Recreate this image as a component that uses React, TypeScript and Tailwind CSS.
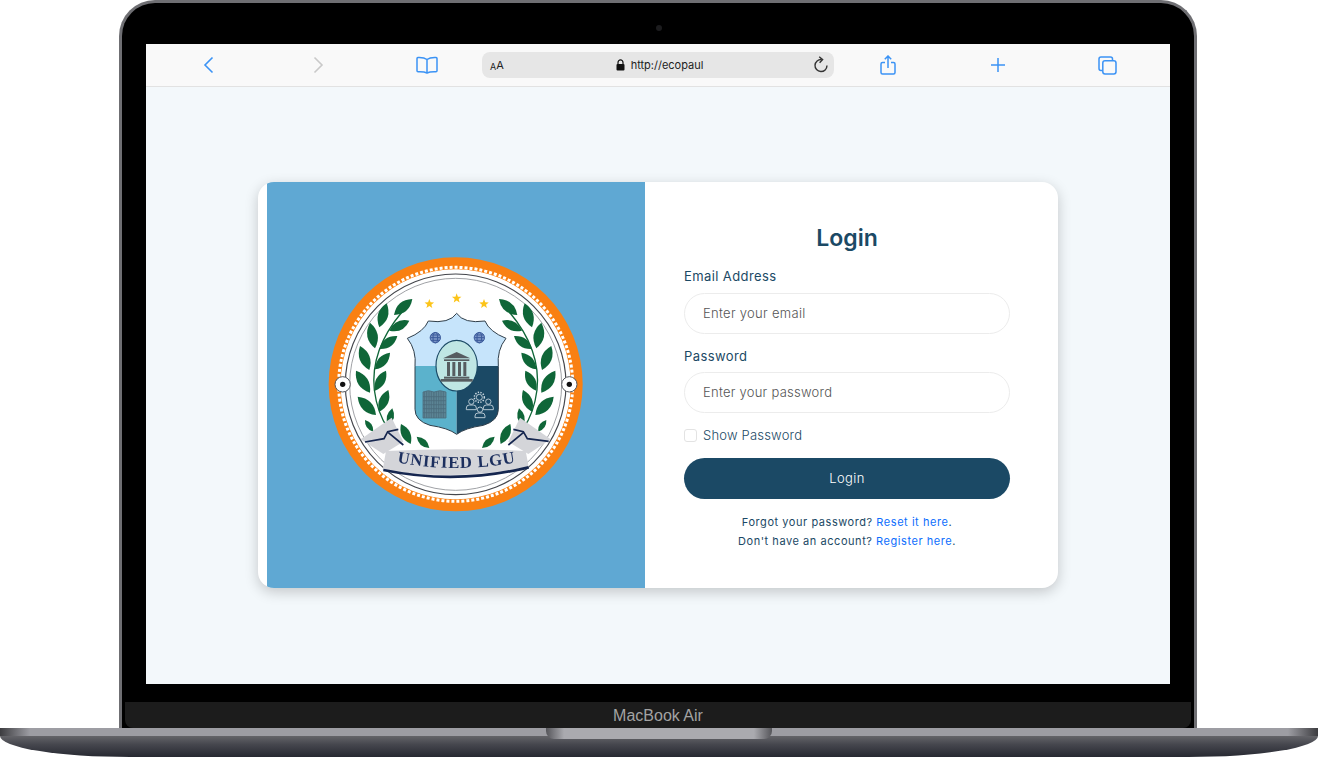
import React from "react";

type L = [number, number, number, number];
const leaves: L[] = [
  [222, 195, 277, 147], [178, 232, 200, 160], [208, 242, 268, 212], [165, 295, 150, 218],
  [178, 297, 232, 258], [148, 360, 120, 288], [165, 358, 210, 308], [150, 428, 108, 362],
  [165, 422, 198, 362], [168, 495, 113, 440], [178, 485, 205, 420], [205, 528, 217, 475],
  [135, 510, 160, 545], [243, 522, 272, 582], [290, 560, 328, 594],
];

function leafPath(x1: number, y1: number, x2: number, y2: number) {
  const mx = (x1 + x2) / 2, my = (y1 + y2) / 2;
  const dx = x2 - x1, dy = y2 - y1;
  const k = 0.4;
  return `M${x1},${y1} Q${mx - dy * k},${my + dx * k} ${x2},${y2} Q${mx + dy * k},${my - dx * k} ${x1},${y1}Z`;
}

function Star({ x, y, r }: { x: number; y: number; r: number }) {
  const pts: string[] = [];
  for (let i = 0; i < 10; i++) {
    const a = -Math.PI / 2 + (i * Math.PI) / 5;
    const q = i % 2 === 0 ? r : r * 0.42;
    pts.push(`${x + q * Math.cos(a)},${y + q * Math.sin(a)}`);
  }
  return <polygon points={pts.join(" ")} fill="#fcc419" />;
}

function Globe({ x, y }: { x: number; y: number }) {
  return (
    <g fill="none" stroke="#3a5a9b" strokeWidth="3">
      <circle cx={x} cy={y} r="15.5" fill="#7d97c8" />
      <ellipse cx={x} cy={y} rx="7" ry="15.5" />
      <path d={`M${x - 15},${y} H${x + 15} M${x - 13},${y - 8} H${x + 13} M${x - 13},${y + 8} H${x + 13}`} />
    </g>
  );
}

function Person({ x, y }: { x: number; y: number }) {
  return (
    <g fill="none" stroke="#c9d6df" strokeWidth="2.6">
      <circle cx={x} cy={y - 9} r="8" />
      <path d={`M${x - 15},${y + 15} v-5 q0,-9 9,-9 h12 q9,0 9,9 v5 z`} />
    </g>
  );
}

function Seal() {
  const SHIELD =
    "M410,190 Q388,222 325,213 Q312,245 262,265 Q290,300 285,350 L285,478 Q285,512 330,526 Q385,534 410,553 Q435,534 490,526 Q535,512 535,478 L535,350 Q530,300 558,265 Q508,245 495,213 Q432,222 410,190Z";
  return (
    <svg viewBox="0 0 810 810" className="w-[270px] h-[270px] blur-[0.6px]">
      <defs>
        <clipPath id="shieldClip"><path d={SHIELD} /></clipPath>
        <path id="ribbonCurve" d="M225,636 Q410,672 595,636" />
      </defs>
      <circle cx="407" cy="403" r="381" fill="#f98012" />
      <circle cx="407" cy="403" r="345" fill="#ffffff" />
      <circle cx="407" cy="403" r="351" fill="none" stroke="#ffffff" strokeWidth="9" strokeDasharray="9 6" />
      <circle cx="407" cy="403" r="331" fill="none" stroke="#44464c" strokeWidth="3.5" />
      <circle cx="407" cy="403" r="318" fill="none" stroke="#8d8f94" strokeWidth="2.5" />
      {[[68, 403], [748, 403]].map(([x, y]) => (
        <g key={x}>
          <circle cx={x} cy={y} r="23" fill="#fff" stroke="#55575c" strokeWidth="3" />
          <circle cx={x} cy={y} r="8" fill="#111" />
        </g>
      ))}
      <Star x={328} y={162} r={15} />
      <Star x={410} y={145} r={15} />
      <Star x={492} y={162} r={15} />
      {[false, true].map((m) => (
        <g key={String(m)} transform={m ? "translate(814,0) scale(-1,1)" : undefined}>
          <path d="M246,186 Q150,300 163,420 Q172,490 204,535" fill="none" stroke="#0f6638" strokeWidth="4" />
          {leaves.map((l, i) => (
            <path key={i} d={leafPath(l[0], l[1], l[2], l[3])} fill="#0f6638" />
          ))}
        </g>
      ))}
      <g clipPath="url(#shieldClip)">
        <rect x="250" y="180" width="320" height="168" fill="#c6e4fb" />
        <rect x="250" y="348" width="160" height="210" fill="#5bb2cc" />
        <rect x="410" y="348" width="160" height="210" fill="#1b4965" />
      </g>
      <path d={SHIELD} fill="none" stroke="#2f3e4a" strokeWidth="3" />
      <Globe x={346} y={263} />
      <Globe x={478} y={263} />
      <ellipse cx="410" cy="347" rx="62" ry="76" fill="#bfe6e4" stroke="#1b4965" strokeWidth="3.5" />
      <g fill="#565c60">
        <polygon points="369,325 410,306 451,325" />
        <rect x="372" y="328" width="76" height="5" />
        <rect x="381" y="336" width="9" height="42" />
        <rect x="397" y="336" width="9" height="42" />
        <rect x="414" y="336" width="9" height="42" />
        <rect x="430" y="336" width="9" height="42" />
        <rect x="372" y="380" width="76" height="6" />
        <rect x="362" y="387" width="96" height="8" />
      </g>
      <g fill="none" stroke="#4b6c7c" strokeWidth="2.4">
        <path d="M309,426 Q325,418 342,426 V504 H309Z" fill="#5c8595" />
        <path d="M342,426 Q360,418 378,426 V504 H342Z" fill="#5c8595" />
        <path d="M313,426 V504 M320,424 V504 M327,423 V504 M334,424 V504 M349,424 V504 M356,423 V504 M363,423 V504 M370,424 V504" />
        <path d="M309,440 H378 M309,452 H378 M309,464 H378 M309,476 H378 M309,488 H378" />
      </g>
      <circle cx="478" cy="442" r="9" fill="none" stroke="#c9d6df" strokeWidth="2.6" />
      <circle cx="478" cy="442" r="15" fill="none" stroke="#c9d6df" strokeWidth="4.5" strokeDasharray="4 4" />
      <Person x={454} y={464} />
      <Person x={505} y={464} />
      <Person x={480} y={488} />
      <path d="M122,568 L215,503 L250,575 L190,612Z" fill="#d4d5d9" />
      <path d="M692,568 L600,503 L565,575 L625,612Z" fill="#d4d5d9" />
      <path d="M135,576 L192,566 L203,545 L235,538 M205,548 L250,585" fill="none" stroke="#15264f" strokeWidth="5" />
      <path d="M686,574 L622,566 L610,545 L580,538 M610,548 L565,585" fill="none" stroke="#15264f" strokeWidth="5" />
      <path d="M198,603 Q410,592 617,603 L626,650 Q410,695 188,660Z" fill="#d4d5d9" />
      <path d="M190,660 Q410,705 626,652" fill="none" stroke="#15264f" strokeWidth="8" />
      <text fontFamily="'Liberation Serif', serif" fontWeight="700" fontSize="50" fill="#1c2f5e" letterSpacing="2.5">
        <textPath href="#ribbonCurve" startOffset="50%" textAnchor="middle">UNIFIED LGU</textPath>
      </text>
    </svg>
  );
}

const ICON = "#3b93f5";

function ToolCell({ children, className }: { children: React.ReactNode; className?: string }) {
  return <div className={`w-[109px] h-[26px] flex items-center justify-center ${className ?? ""}`}>{children}</div>;
}

function Toolbar() {
  return (
    <div className="h-[43px] bg-[#f9f9f9] border-b border-[#e2e2e2] flex items-center justify-center shrink-0">
      <ToolCell className="pr-[2px]">
        <svg width="12" height="18" viewBox="0 0 12 18" fill="none" stroke={ICON} strokeWidth="1.6"><path d="M9.5,1.5 L2,9 L9.5,16.5" /></svg>
      </ToolCell>
      <ToolCell className="pr-[2px]">
        <svg width="12" height="18" viewBox="0 0 12 18" fill="none" stroke="#c9c9c9" strokeWidth="1.6"><path d="M2.5,1.5 L10,9 L2.5,16.5" /></svg>
      </ToolCell>
      <ToolCell className="pr-[2px]">
        <svg width="22" height="18" viewBox="0 0 22 18" fill="none" stroke={ICON} strokeWidth="1.5">
          <path d="M11,3.5 Q8,1.2 2,1.5 Q1,1.6 1,2.6 V14.8 Q1,15.8 2,15.8 Q8,15.5 11,17 Q14,15.5 20,15.8 Q21,15.8 21,14.8 V2.6 Q21,1.6 20,1.5 Q14,1.2 11,3.5Z M11,3.5 V17" />
        </svg>
      </ToolCell>
      <div className="w-[352px] h-[26px] rounded-[8px] bg-[#e6e6e6] flex items-center justify-between pl-[8px] pr-[5px]">
        <span className="text-[#222] leading-none flex items-end w-[16px]">
          <span className="text-[9px]">A</span><span className="text-[11px]">A</span>
        </span>
        <span className="flex items-center gap-[6px] text-[11px] text-[#222]">
          <svg width="9" height="12" viewBox="0 0 9 12"><path d="M2,5 V3.4 A2.5,2.5 0 0 1 7,3.4 V5" fill="none" stroke="#111" strokeWidth="1.2" /><rect x="0.5" y="5" width="8" height="6.5" rx="1" fill="#111" /></svg>
          http://ecopaul
        </span>
        <svg width="16" height="18" viewBox="0 0 16 18" fill="none" stroke="#333" strokeWidth="1.4">
          <path d="M8.6,3.6 A6,6 0 1 0 14,9.6" /><path d="M6.2,0.8 L9.6,3.6 L6.6,6.8" />
        </svg>
      </div>
      <ToolCell className="pr-[2px]">
        <svg width="16" height="20" viewBox="0 0 16 20" fill="none" stroke={ICON} strokeWidth="1.5">
          <path d="M5,7.5 H2.5 Q1,7.5 1,9 V17.5 Q1,19 2.5,19 H13.5 Q15,19 15,17.5 V9 Q15,7.5 13.5,7.5 H11" />
          <path d="M8,13 V1.2 M4.8,4.2 L8,1 L11.2,4.2" />
        </svg>
      </ToolCell>
      <ToolCell>
        <svg width="16" height="16" viewBox="0 0 16 16" fill="none" stroke={ICON} strokeWidth="1.5"><path d="M8,1 V15 M1,8 H15" /></svg>
      </ToolCell>
      <ToolCell className="pl-[2px]">
        <svg width="19" height="19" viewBox="0 0 19 19" fill="none" stroke={ICON} strokeWidth="1.5">
          <path d="M4.5,14.5 H3 Q1,14.5 1,12.5 V3 Q1,1 3,1 H12.5 Q14.5,1 14.5,3 V4.5" />
          <rect x="4.8" y="4.8" width="13.2" height="13.2" rx="2.2" />
        </svg>
      </ToolCell>
    </div>
  );
}

function LoginCard() {
  return (
    <div className="w-[800px] h-[406px] bg-white rounded-[16px] shadow-[0_4px_14px_rgba(0,0,0,0.2)] flex pl-[9px] overflow-hidden">
      <div className="w-[378px] bg-[#5fa8d3] flex items-center justify-center pr-[2px]">
        <Seal />
      </div>
      <div className="flex-1 pl-[39px] pr-[48px] pt-[38px] flex flex-col">
        <h1 className="text-[23px] leading-[36px] font-semibold text-[#1b4965] text-center">Login</h1>
        <label className="mt-[10px] text-[13px] leading-[20px] text-[#1b4965] tracking-[0.4px]">Email Address</label>
        <input
          placeholder="Enter your email"
          className="mt-[7px] h-[41px] rounded-full border border-[#ececec] bg-white px-[18px] pb-[2px] text-[13px] font-light tracking-[0.3px] placeholder:text-[#555]"
        />
        <label className="mt-[12px] text-[13px] leading-[20px] text-[#1b4965] tracking-[0.4px]">Password</label>
        <input
          placeholder="Enter your password"
          className="mt-[6px] h-[41px] rounded-full border border-[#ececec] bg-white px-[18px] pb-[2px] text-[13px] font-light tracking-[0.25px] placeholder:text-[#555]"
        />
        <div className="mt-[12px] h-[20px] flex items-center gap-[6px]">
          <span className="w-[13px] h-[13px] rounded-[3px] border border-[#e3e3e3] bg-white" />
          <span className="text-[13px] font-light text-[#1b4965] tracking-[0.2px] pt-[1px]">Show Password</span>
        </div>
        <button className="mt-[13px] h-[41px] rounded-full bg-[#1b4965] text-white text-[13px] font-light tracking-[0.4px]">Login</button>
        <p className="mt-[14px] text-[11px] leading-[19px] text-[#1b4965] text-center tracking-[0.55px]">
          Forgot your password? <a className="text-[#0d6efd]">Reset it here</a>.
          <br />
          Don't have an account? <a className="text-[#0d6efd]">Register here</a>.
        </p>
      </div>
    </div>
  );
}

export default function App() {
  return (
    <div className="w-[1318px] h-[757px] bg-white overflow-hidden flex flex-col font-['Inter','Liberation_Sans',sans-serif]">
      <div className="relative ml-[119px] w-[1078px] h-[728px] shrink-0 bg-black rounded-t-[36px] border-[3px] border-b-0 border-[#6f6f73] flex flex-col">
        <span className="absolute left-[534px] top-[22px] w-[6px] h-[6px] rounded-full bg-[#1c1c1e]" />
        <div className="pt-[41px] px-[24px]">
          <div className="h-[640px] bg-[#f3f8fb] flex flex-col">
            <Toolbar />
            <div className="flex-1 flex items-center justify-center pb-[1px]">
              <LoginCard />
            </div>
          </div>
        </div>
        <div className="mt-[18px] mx-[3px] h-[26px] pt-[2px] rounded-b-[8px] bg-[#1c1c1c] flex items-center justify-center text-[16px] text-[#a3a3a3] font-['Liberation_Sans',sans-serif]">
          MacBook Air
        </div>
      </div>
      <div className="relative flex-1 flex flex-col">
        <div className="h-[8px] bg-[linear-gradient(to_right,#3c3c40_0,#9d9da3_30px,#9d9da3_1288px,#3c3c40_100%)]" />
        <div className="flex-1 rounded-b-[130px_21px] bg-[linear-gradient(to_bottom,#646469,#46474e_40%,#262831)]" />
        <div className="absolute left-[546px] top-0 w-[226px] h-[11px] rounded-b-[8px] bg-[linear-gradient(to_right,#55555a,#aaaaaf_8%,#aaaaaf_92%,#55555a)]" />
      </div>
    </div>
  );
}
